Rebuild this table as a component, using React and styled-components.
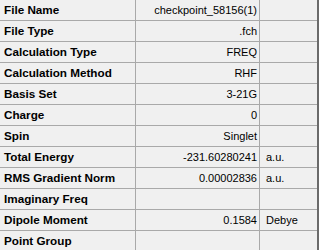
import React from 'react';
import styled, { createGlobalStyle } from 'styled-components';

const rows = [
    { label: 'File Name', value: 'checkpoint_58156(1)' },
    { label: 'File Type', value: '.fch' },
    { label: 'Calculation Type', value: 'FREQ' },
    { label: 'Calculation Method', value: 'RHF' },
    { label: 'Basis Set', value: '3-21G' },
    { label: 'Charge', value: '0' },
    { label: 'Spin', value: 'Singlet' },
    { label: 'Total Energy', value: '-231.60280241', unit: 'a.u.' },
    { label: 'RMS Gradient Norm', value: '0.00002836', unit: 'a.u.' },
    { label: 'Imaginary Freq', value: '' },
    { label: 'Dipole Moment', value: '0.1584', unit: 'Debye' },
    { label: 'Point Group', value: '' }
];

const GlobalStyle = createGlobalStyle`
    html, body {
        margin: 0;
        padding: 0;
        overflow: hidden;
        background: #f0f0f0;
    }
`;

const Grid = styled.div`
    width: 317px;
    height: 250px;
    overflow: hidden;
    border-right: 2px solid #6b6b6b;
    background: #f0f0f0;
    font-family: "Liberation Sans", Arial, sans-serif;
    color: #000;
`;

const Row = styled.div`
    display: grid;
    grid-template-columns: 136px 124px 57px;
    height: 21px;
    box-sizing: border-box;
    border-bottom: 1px solid #a9a9a9;
`;

const Cell = styled.div`
    box-sizing: border-box;
    height: 20px;
    line-height: 20px;
    white-space: nowrap;
    overflow: hidden;
    font-size: 11px;
    text-align: ${p => p.$align || 'left'};
    padding: ${p => p.$pad || '0'};
    border-right: ${p => (p.$last ? 'none' : '1px solid #a9a9a9')};
`;

const Label = styled(Cell)`
    font-size: 11.7px;
    font-weight: 700;
    padding-left: 4px;
`;

const App = () => (
    <>
        <GlobalStyle />
        <Grid>
            {rows.map(r => (
                <Row key={r.label}>
                    <Label>{r.label}</Label>
                    <Cell $align="right" $pad="0 2px 0 0">{r.value}</Cell>
                    <Cell $last $pad="0 0 0 6px">{r.unit}</Cell>
                </Row>
            ))}
        </Grid>
    </>
);

export default App;
